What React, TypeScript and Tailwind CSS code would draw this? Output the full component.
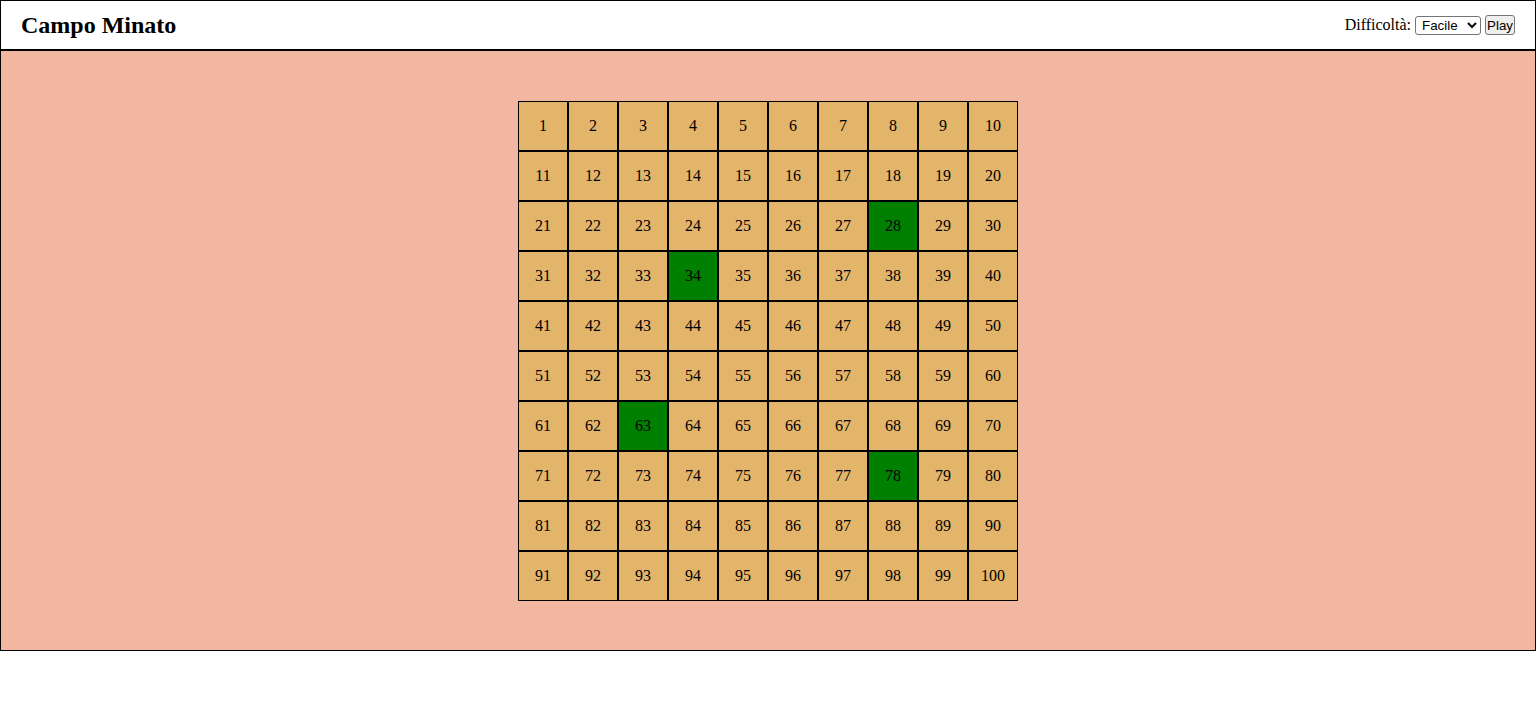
import React from "react";

const greens = new Set([28, 34, 63, 78]);

export default function App() {
  const cells = Array.from({ length: 100 }, (_, i) => i + 1);
  return (
    <div className="font-['Liberation_Serif',serif] text-black bg-white min-h-[714px]">
      <header className="h-[50px] border border-black flex items-center justify-between px-5">
        <h1 className="text-[24px] font-bold leading-none">Campo Minato</h1>
        <div className="flex items-center gap-1 text-[16px]">
          <label>Difficoltà:</label>
          <select className="h-[19px] w-[66px] border border-[#767676] rounded-[3px] bg-white text-[13.33px] font-['Liberation_Sans',sans-serif] px-0.5">
            <option>Facile</option>
            <option>Media</option>
            <option>Difficile</option>
          </select>
          <button className="h-[20px] w-[30px] px-0 border border-[#767676] rounded-[3px] bg-[#efefef] text-[13.33px] font-['Liberation_Sans',sans-serif]">
            Play
          </button>
        </div>
      </header>
      <main className="border border-black bg-[#f1b7a0] pt-[50px] pb-[49px] flex justify-center">
        <div className="grid grid-cols-[repeat(10,50px)] w-[500px]">
          {cells.map((n) => (
            <div
              key={n}
              className={`h-[50px] w-[50px] border border-black flex items-center justify-center text-[16px] ${
                greens.has(n) ? "bg-[#008000]" : "bg-[#e3b56b]"
              }`}
            >
              {n}
            </div>
          ))}
        </div>
      </main>
    </div>
  );
}
